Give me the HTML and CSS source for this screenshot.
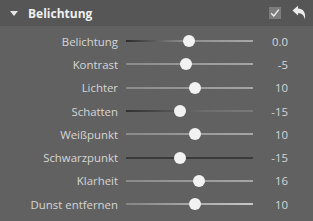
FILE: index.html
```html
<!DOCTYPE html>
<html>
<head>
<meta charset="utf-8">
<link rel="stylesheet" href="styles.css">
</head>
<body>
<div class="panel">
  <div class="header">
    <svg class="caret" width="8" height="5" viewBox="0 0 8 5"><path d="M0 0H8L4 5Z" fill="#e6e6e6"/></svg>
    <span class="title">Belichtung</span>
    <span class="spacer"></span>
    <span class="check">
      <svg width="12" height="12" viewBox="0 0 12 12"><path d="M2.2 6.3L4.8 9L9.8 2.6" fill="none" stroke="#f2f2f2" stroke-width="1.3"/></svg>
    </span>
    <svg class="undo" width="15" height="16" viewBox="0 0 15 16"><path d="M0.5 5.5L6 0.8V3.6C10.8 3.6 14 7 13 14.5C12 10 9.8 8.2 6 8.2V10.5Z" fill="#ececec"/></svg>
  </div>
  <div class="rows">
    <div class="row"><span class="label">Belichtung</span><div class="track t-exp"><span class="thumb" style="left:49.6%"></span></div><span class="value">0.0</span></div>
    <div class="row"><span class="label">Kontrast</span><div class="track t-light"><span class="thumb" style="left:47.2%"></span></div><span class="value">-5</span></div>
    <div class="row"><span class="label">Lichter</span><div class="track t-light"><span class="thumb" style="left:54.3%"></span></div><span class="value">10</span></div>
    <div class="row"><span class="label">Schatten</span><div class="track t-shadow"><span class="thumb" style="left:42.5%"></span></div><span class="value">-15</span></div>
    <div class="row"><span class="label">Weißpunkt</span><div class="track t-light"><span class="thumb" style="left:54.3%"></span></div><span class="value">10</span></div>
    <div class="row"><span class="label">Schwarzpunkt</span><div class="track t-dark"><span class="thumb" style="left:42.5%"></span></div><span class="value">-15</span></div>
    <div class="row"><span class="label">Klarheit</span><div class="track t-light"><span class="thumb" style="left:57.5%"></span></div><span class="value">16</span></div>
    <div class="row"><span class="label">Dunst entfernen</span><div class="track t-haze"><span class="thumb" style="left:54.3%"></span></div><span class="value">10</span></div>
  </div>
</div>
</body>
</html>
```

FILE: styles.css
```css
html, body {
  margin: 0;
  padding: 0;
  background: #616161;
}
.panel {
  width: 313px;
  height: 221px;
  background: #616161;
  font-family: "Open Sans", "Noto Sans", sans-serif;
  overflow: hidden;
}
.header {
  height: 26px;
  background: #565656;
  display: flex;
  align-items: center;
  padding: 0 6px 0 10px;
  box-sizing: border-box;
}
.caret {
  margin-right: 10px;
  margin-top: 1px;
}
.title {
  color: #f0f0f0;
  font-weight: bold;
  font-size: 12px;
}
.spacer {
  flex: 1;
}
.check {
  width: 12px;
  height: 12px;
  background: #7c7c7c;
  display: flex;
  margin-right: 11px;
}
.undo {
  display: block;
}
.rows {
  padding-top: 3.5px;
}
.row {
  display: grid;
  grid-template-columns: 118px 127px 27px;
  column-gap: 8px;
  height: 23.3px;
  align-items: center;
}
.label {
  text-align: right;
  color: #d6d6d6;
  font-size: 11.4px;
  white-space: nowrap;
}
.value {
  text-align: right;
  color: #d6d6d6;
  font-size: 11.4px;
}
.track {
  position: relative;
  height: 2px;
}
.t-exp { background: linear-gradient(to right, #2c2c2c, #8c8c8c 45%, #a8a8a8 100%); }
.t-light { background: linear-gradient(to right, #8a8a8a, #a6a6a6); }
.t-shadow { background: linear-gradient(to right, #303030, #6c6c6c 60%, #7a7a7a); }
.t-dark { background: #3a3a3a; }
.t-haze { background: linear-gradient(to right, #858585, #c8c8c8); }
.thumb {
  position: absolute;
  top: 50%;
  width: 12px;
  height: 12px;
  margin: -6px 0 0 -6px;
  border-radius: 50%;
  background: #f2f2f2;
}
```
